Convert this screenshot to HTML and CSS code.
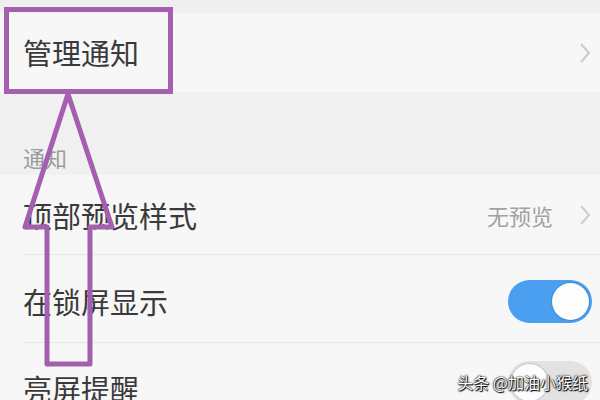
FILE: index.html
```html
<!DOCTYPE html>
<html lang="zh-CN">
<head>
<meta charset="utf-8">
<link rel="stylesheet" href="styles.css">
</head>
<body>
<div class="screen">
  <div class="top-gap"></div>
  <div class="row row-main">
    <span class="label">管理通知</span>
    <svg class="chev" viewBox="0 0 12 22" width="12" height="22"><path d="M2 2 L10 11 L2 20" fill="none" stroke="#cccccc" stroke-width="2.2"/></svg>
  </div>
  <div class="section-head">通知</div>
  <div class="group">
    <div class="row row-a">
      <span class="label">顶部预览样式</span>
      <span class="right"><span class="value">无预览</span><svg class="chev" viewBox="0 0 12 22" width="12" height="22"><path d="M2 2 L10 11 L2 20" fill="none" stroke="#d0d0d0" stroke-width="2.2"/></svg></span>
    </div>
    <div class="row row-b">
      <span class="label">在锁屏显示</span>
      <span class="toggle on"><span class="knob"></span></span>
    </div>
    <div class="row row-c">
      <span class="label">亮屏提醒</span>
      <span class="toggle off"><span class="knob"></span></span>
    </div>
  </div>
  <svg class="annot" width="600" height="400" viewBox="0 0 600 400">
    <rect x="6.5" y="9.5" width="164" height="82" fill="none" stroke="#a45fae" stroke-width="5"/>
    <polygon points="68,94 112,227 90,227 90,364 47,364 47,227 25,227" fill="none" stroke="#a45fae" stroke-width="5" stroke-linejoin="round"/>
  </svg>
  <div class="watermark">头条 @加油小猴纸</div>
</div>
</body>
</html>
```
FILE: styles.css
```css
* { box-sizing: border-box; }
html, body { margin: 0; padding: 0; }
body {
  width: 600px;
  height: 400px;
  overflow: hidden;
  font-family: "Noto Sans CJK SC", "Noto Sans", sans-serif;
  background: #f0f0f0;
}
.screen {
  position: relative;
  width: 600px;
  height: 400px;
  overflow: hidden;
  background: #f0f0f0;
}
.top-gap { height: 13px; background: #efefef; }
.row {
  display: flex;
  align-items: center;
  justify-content: space-between;
  padding: 0 9px 0 23px;
  background: #f7f7f7;
}
.label {
  font-size: 29px;
  line-height: 1;
  color: #3a3a3a;
}
.row-main { height: 79px; }
.section-head {
  height: 83px;
  padding: 54px 0 0 23px;
  font-size: 22px;
  line-height: 22px;
  color: #9c9c9c;
  background: #f0f0f0;
}
.group {
  display: flex;
  flex-direction: column;
  background: #f7f7f7;
}
.row-a { height: 80px; }
.row-b { height: 88px; padding-top: 4px; }
.row-c { height: 90px; }
.row-a, .row-b { position: relative; }
.row-a::after, .row-b::after {
  content: "";
  position: absolute;
  left: 23px;
  right: 0;
  bottom: 0;
  height: 1px;
  background: #e6e6e6;
}
.right { display: flex; align-items: center; gap: 26px; }
.value { font-size: 22px; line-height: 1; color: #a2a2a2; }
.chev { display: block; }
.toggle {
  position: relative;
  display: flex;
  align-items: center;
  width: 84px;
  height: 43px;
  border-radius: 22px;
  margin-right: -1px;
  padding: 0 3px;
}
.toggle.on { background: #4a9ff0; justify-content: flex-end; }
.toggle.off { background: #e2e2e2; justify-content: flex-start; }
.row-c .toggle { align-self: flex-start; margin-top: 18px; }
.knob {
  width: 37px;
  height: 37px;
  border-radius: 50%;
  background: #fdfdfd;
  box-shadow: 0 0 1px 1px rgba(0,0,0,0.12);
}
.annot {
  position: absolute;
  left: 0;
  top: 0;
  pointer-events: none;
}
.watermark {
  position: absolute;
  right: 12px;
  top: 372px;
  font-size: 16px;
  line-height: 20px;
  color: #ffffff;
  text-shadow: 0 0 2px #000, 0 0 1px #000, 1px 1px 1px #000;
  white-space: nowrap;
}
```
